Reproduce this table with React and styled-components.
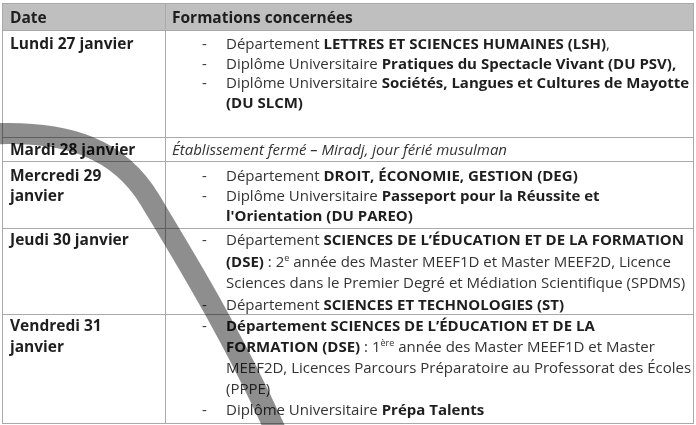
import React from "react";
import styled, { createGlobalStyle } from "styled-components";

const GlobalStyle = createGlobalStyle`
  body {
    margin: 0;
    background: #ffffff;
    font-family: "Open Sans", "DejaVu Sans", sans-serif;
  }
`;

const Page = styled.div`
  position: relative;
  width: 696px;
  height: 425px;
  padding: 3px 2px 0 2px;
  box-sizing: border-box;
  overflow: hidden;
`;

const Table = styled.div`
  border: 1px solid #a9a9a9;
  color: #333333;
  font-size: 15px;
`;

const Row = styled.div`
  display: grid;
  grid-template-columns: 163px 1fr;
  height: ${(p) => p.$h}px;
  box-sizing: border-box;
  line-height: ${(p) => p.$lh || 19}px;
  background: ${(p) => (p.$head ? "#bfbfbf" : "transparent")};
  & + & {
    border-top: 1px solid #a9a9a9;
  }
`;

const DateCell = styled.div`
  border-right: 1px solid #a9a9a9;
  padding: ${(p) => p.$pt || 0}px 20px 0 7px;
  font-weight: 700;
  font-size: 15.5px;
  color: #1e1e1e;
  display: ${(p) => (p.$center ? "flex" : "block")};
  align-items: center;
`;

const InfoCell = styled.div`
  padding: ${(p) => p.$pt || 0}px 2px 0 6px;
  display: ${(p) => (p.$center ? "flex" : "block")};
  align-items: center;
  white-space: nowrap;
  font-weight: ${(p) => (p.$head ? 700 : 400)};
  font-size: ${(p) => (p.$head ? "15.5px" : "inherit")};
  color: ${(p) => (p.$head ? "#1e1e1e" : "inherit")};
`;

const Note = styled.span`
  font-style: italic;
`;

const List = styled.ul`
  list-style: none;
  margin: 0;
  padding: 0;
`;

const Item = styled.li`
  display: flex;
`;

const Dash = styled.span`
  flex: 0 0 54px;
  padding-left: 30px;
  box-sizing: border-box;
`;

const Text = styled.span`
  flex: 1;
`;

const B = styled.b`
  font-weight: 700;
  color: #1e1e1e;
`;

const Sup = styled.sup`
  font-size: 9px;
  line-height: 0;
  vertical-align: 6px;
`;

const Swoosh = styled.svg`
  position: absolute;
  left: 0;
  top: 0;
  pointer-events: none;
  mix-blend-mode: multiply;
`;

const rows = [
  {
    date: "Lundi 27 janvier",
    h: 107,
    pt: 3,
    lh: 19.5,
    items: [
      <>Département <B>LETTRES ET SCIENCES HUMAINES (LSH)</B>,</>,
      <>Diplôme Universitaire <B>Pratiques du Spectacle Vivant (DU PSV),</B></>,
      <>
        Diplôme Universitaire <B>Sociétés, Langues et Cultures de Mayotte</B>
        <br />
        <B>(DU SLCM)</B>
      </>,
    ],
  },
  {
    date: "Mardi 28 janvier",
    h: 24,
    note: "Établissement fermé – Miradj, jour férié musulman",
  },
  {
    date: "Mercredi 29 janvier",
    h: 67,
    pt: 3,
    lh: 20,
    items: [
      <>Département <B>DROIT, ÉCONOMIE, GESTION (DEG)</B></>,
      <>
        Diplôme Universitaire <B>Passeport pour la Réussite et</B>
        <br />
        <B>l'Orientation (DU PAREO)</B>
      </>,
    ],
  },
  {
    date: "Jeudi 30 janvier",
    h: 86,
    pt: 0,
    lh: 21.5,
    items: [
      <>
        Département <B>SCIENCES DE L’ÉDUCATION ET DE LA FORMATION</B>
        <br />
        <B>(DSE)</B> : 2<Sup>e</Sup> année des Master MEEF1D et Master MEEF2D, Licence
        <br />
        Sciences dans le Premier Degré et Médiation Scientifique (SPDMS)
      </>,
      <>Département <B>SCIENCES ET TECHNOLOGIES (ST)</B></>,
    ],
  },
  {
    date: "Vendredi 31 janvier",
    h: 109,
    pt: 0,
    lh: 21,
    items: [
      <>
        <B>Département SCIENCES DE L’ÉDUCATION ET DE LA</B>
        <br />
        <B>FORMATION (DSE)</B> : 1<Sup>ère</Sup> année des Master MEEF1D et Master
        <br />
        MEEF2D, Licences Parcours Préparatoire au Professorat des Écoles
        <br />
        (PPPE)
      </>,
      <>Diplôme Universitaire <B>Prépa Talents</B></>,
    ],
  },
];

export default function App() {
  return (
    <>
      <GlobalStyle />
      <Page>
        <Table>
          <Row $h={26} $head>
            <DateCell $center>Date</DateCell>
            <InfoCell $center $head>Formations concernées</InfoCell>
          </Row>
          {rows.map((r) => (
            <Row key={r.date} $h={r.h} $lh={r.lh}>
              <DateCell $pt={r.pt} $center={!!r.note}>{r.date}</DateCell>
              <InfoCell $pt={r.pt} $center={!!r.note}>
                {r.note ? (
                  <Note>{r.note}</Note>
                ) : (
                  <List>
                    {r.items.map((it, i) => (
                      <Item key={i}>
                        <Dash>-</Dash>
                        <Text>{it}</Text>
                      </Item>
                    ))}
                  </List>
                )}
              </InfoCell>
            </Row>
          ))}
        </Table>
        <Swoosh width="696" height="425" viewBox="0 0 696 425">
          <path
            d="M -10 134 C 70 130 120 150 150 200 S 236 340 282 445"
            fill="none"
            stroke="#8e8e8e"
            strokeWidth="21"
          />
        </Swoosh>
      </Page>
    </>
  );
}
